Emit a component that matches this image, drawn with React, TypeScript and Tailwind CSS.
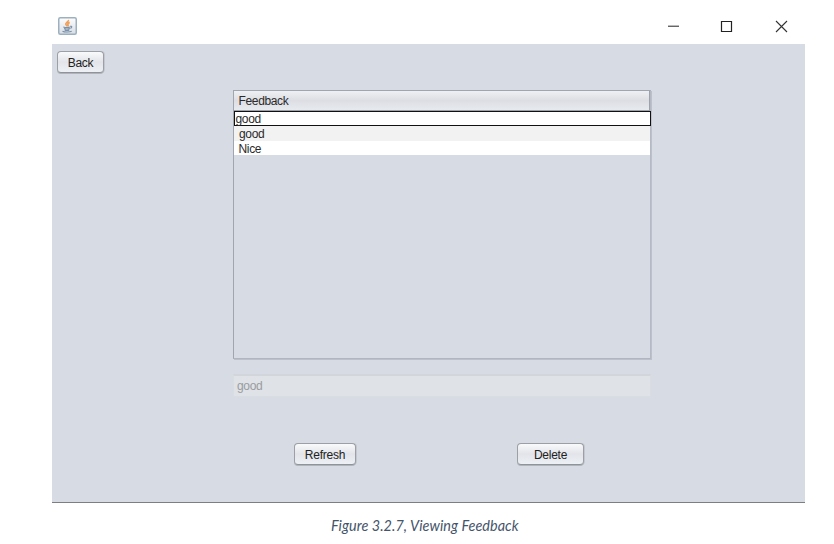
import type { ReactNode } from 'react';

function JavaIcon() {
  return (
    <svg width="19" height="18" viewBox="0 0 19 18">
      <defs>
        <linearGradient id="tile" x1="0" y1="0" x2="0" y2="1">
          <stop offset="0" stopColor="#fdfdfd" />
          <stop offset="1" stopColor="#d7dee5" />
        </linearGradient>
      </defs>
      <rect x="0.75" y="0.75" width="17.5" height="16.5" rx="1.5" fill="url(#tile)" stroke="#9db0bf" strokeWidth="1.5" />
      <path d="M10.3 3c.9 1.5-3.1 2.6-2.5 4.3.3.8 1.2 1.3 1.4 2.1M11.7 5.4c-1.7.7-2.3 1.5-1.6 2.5.4.7.1 1.1-.5 1.5" fill="none" stroke="#f0a05a" strokeWidth="1.7" />
      <path d="M5.3 9.9c1.7.6 5.2.6 7 0M6 11.6c1.8.5 4.2.5 5.9 0M6.7 13.1c1.3.4 3.2.4 4.5 0M12.2 9.4c2-.5 2.2 1.2.2 2M4.5 14.3c2 1.1 7.5 1 9.3-.2" fill="none" stroke="#7890a8" strokeWidth="1.1" />
    </svg>
  );
}

function Button({ className, children }: { className: string; children: ReactNode }) {
  return (
    <button
      className={`h-[22px] shrink-0 rounded-[4px] border border-[#9c9fa5] border-b-[#909399] bg-linear-to-b from-[#f9fafb] via-[#e2e4e9] to-[#edf0f4] pt-px text-center text-[12px] leading-[21px] tracking-[-0.25px] text-[#222] shadow-[0_1px_0_#b0b4bb,1px_0_0_#c3c7cf] ${className}`}
    >
      {children}
    </button>
  );
}

export default function App() {
  return (
    <div className="flex h-[544px] w-[834px] flex-col bg-white pl-[52px] font-['Liberation_Sans',Arial,sans-serif] text-[12px] tracking-[-0.35px] text-[#2a2a2a]">
      <header className="flex h-11 w-[753px] shrink-0 justify-between pt-[17px] pl-[6px]">
        <JavaIcon />
        <svg width="138" height="20" viewBox="0 0 138 20" fill="none" stroke="#222" className="shrink-0">
          <path d="M1 9.25h11" stroke="#555" strokeWidth="1.3" />
          <path d="M54.5 4.5h10v10h-10z" strokeWidth="1.2" />
          <path d="M109 4l11 11M120 4l-11 11" stroke="#333" strokeWidth="1.1" />
        </svg>
      </header>

      <main className="flex h-[459px] w-[753px] shrink-0 flex-col border-b border-[#7c7e82] bg-[#d7dbe3]">
        <div className="flex h-[46px] shrink-0 pt-[7px] pl-[5px]">
          <Button className="w-[47px]">Back</Button>
        </div>

        <section className="ml-[181px] flex h-[269px] w-[418px] shrink-0 flex-col border border-[#a0a5b0] border-r-[#b4b9c3] border-b-[#b0b5bf] shadow-[1px_1px_0_#bbc0ca]">
          <div className="h-[20px] shrink-0 border-r border-b border-[#9da1ab] bg-linear-to-b from-[#eff0f3] via-[#dcdee3] to-[#e7eaef] pl-[4.5px] leading-[20px]">
            Feedback
          </div>
          <div className="-mr-px h-[15px] shrink-0 border border-[#111] bg-white pl-[0.5px] leading-[15px]">good</div>
          <div className="h-[15px] shrink-0 bg-[#f2f2f2] pl-[5px] leading-[16px]">good</div>
          <div className="h-[14px] shrink-0 bg-white pl-[4.5px] leading-[16px]">Nice</div>
        </section>

        <div className="mt-[15px] ml-[181px] h-[23px] w-[418px] shrink-0 border border-t-2 border-[#d9dce0] border-t-[#d2d5da] bg-[#dfe2e6] pl-[3px] leading-[21px] text-[#999ca1]">
          good
        </div>

        <div className="mt-[46px] ml-[242px] flex gap-[161px]">
          <Button className="w-[62px]">Refresh</Button>
          <Button className="w-[67px]">Delete</Button>
        </div>
      </main>

      <p className="mt-[12px] pl-[279px] font-[Lato,sans-serif] text-[14.4px] leading-[22px] tracking-[0.06px] text-[#44546a] italic">
        Figure 3.2.7, Viewing Feedback
      </p>
    </div>
  );
}
